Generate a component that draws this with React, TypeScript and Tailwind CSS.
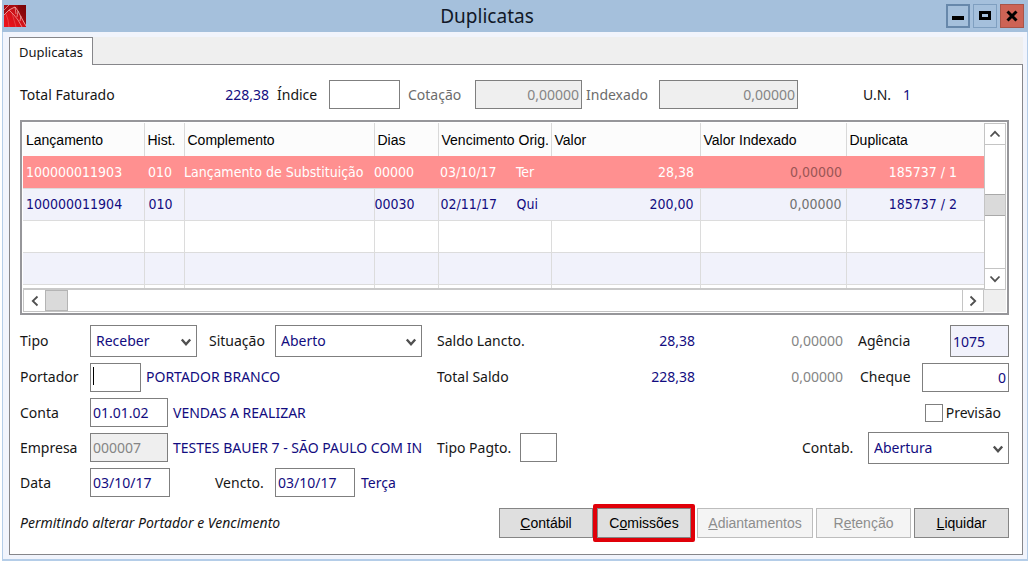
import React from 'react';
import clsx from 'clsx';

const entries = [
  { lancamento: '100000011903', hist: '010', complemento: 'Lançamento de Substituição', dias: '00000', venc: '03/10/17', dia: 'Ter', valor: '28,38', indexado: '0,00000', duplicata: '185737 / 1' },
  { lancamento: '100000011904', hist: '010', complemento: '', dias: '00030', venc: '02/11/17', dia: 'Qui', valor: '200,00', indexado: '0,00000', duplicata: '185737 / 2' },
];

const headers = ['Lançamento', 'Hist.', 'Complemento', 'Dias', 'Vencimento Orig.', 'Valor', 'Valor Indexado', 'Duplicata'];

const field = 'h-[29px] border border-[#7f7f7f] bg-white px-0.5 text-[#120c80] outline-none disabled:bg-[#efefef] disabled:text-[#858585]';

const Chevron = ({ className }: { className?: string }) => (
  <svg viewBox="0 0 12 12" className={clsx('h-3 w-3', className)} fill="none" stroke="#505050" strokeWidth="1.8">
    <path d="M1.5 3.5 6 8.2l4.5-4.7" />
  </svg>
);

const Combo = ({ id, value, className }: { id: string; value: string; className: string }) => (
  <div className={clsx('relative', className)}>
    <select id={id} defaultValue={value} className="h-8 w-full appearance-none border border-[#7f7f7f] bg-white pl-[5px] text-[#120c80] outline-none">
      <option>{value}</option>
    </select>
    <svg viewBox="0 0 12 12" className="pointer-events-none absolute top-3 right-[5px] h-3 w-3" fill="none" stroke="#505050" strokeWidth="2.4">
      <path d="M1.8 2.5 6 7.2l4.2-4.7" />
    </svg>
  </div>
);

const Logo = () => (
  <svg viewBox="0 0 22 22" className="h-[22px] w-[22px]">
    <defs>
      <linearGradient id="logo" x1="0" y1="1" x2="1" y2="0">
        <stop offset="0" stopColor="#f3121b" />
        <stop offset="0.55" stopColor="#cf1218" />
        <stop offset="1" stopColor="#6d0306" />
      </linearGradient>
    </defs>
    <rect width="22" height="22" fill="url(#logo)" />
    <path d="M0 0h11L4 6l-4 4z" fill="#a80c12" />
    <path d="M14 0h8v20c-3-4-5-9-8-13z" fill="#7c0508" opacity="0.6" />
    <g fill="none" stroke="#f9b9b5" strokeWidth="0.8">
      <path d="M0 10 5 5l6-3 3 4 3 6 5 9" />
      <path d="m5 5 5 5 4 5 4 7" opacity="0.8" />
      <path d="m2 9 2 6 1 7M8 8l2 7 2 7" opacity="0.35" />
      <path d="m0 5 5-5M11 2l1 7M14 6l-1 6M17 11l-1 5" opacity="0.8" />
    </g>
  </svg>
);

const TitleBar = () => (
  <header className="flex h-8 items-center bg-[#a5c0dc] pr-1 pl-0.5">
    <Logo />
    <h1 className="flex-1 pl-0.5 text-center text-[19px] leading-6 text-[#111827]">Duplicatas</h1>
    <div className="flex gap-[3px]">
      <button aria-label="Minimizar" className="flex h-6 w-6 items-center justify-center border-2 border-[#6788ab]">
        <svg viewBox="0 0 12 12" className="h-3 w-3"><path d="M0 6h12v4H0z" /></svg>
      </button>
      <button aria-label="Maximizar" className="flex h-6 w-6 items-center justify-center border border-[#7f9fc0]">
        <svg viewBox="0 0 12 12" className="h-3 w-3" fill="none" stroke="#000" strokeWidth="3"><path d="M1.5 2.5h9v6h-9z" /></svg>
      </button>
      <button aria-label="Fechar" className="flex h-6 w-6 items-center justify-center border border-[#a85448] bg-[#cd6355]">
        <svg viewBox="0 0 12 12" className="h-3 w-3" fill="none" stroke="#000" strokeWidth="3"><path d="m1.5 1.5 9 9m0-9-9 9" /></svg>
      </button>
    </div>
  </header>
);

const Totals = () => (
  <div className="flex h-[29px] items-center">
    <span className="w-[124px]">Total Faturado</span>
    <span className="w-[125px] text-right text-[#120c80]">228,38</span>
    <label htmlFor="indice" className="ml-2 w-[52px]">Índice</label>
    <input id="indice" className={clsx(field, 'w-[71px]')} />
    <label htmlFor="cotacao" className="ml-2 w-[67px] text-[#6c6c6c]">Cotação</label>
    <input id="cotacao" disabled defaultValue="0,00000" className={clsx(field, 'w-[107px] text-right')} />
    <label htmlFor="indexado" className="ml-1 w-[73px] text-[#6c6c6c]">Indexado</label>
    <input id="indexado" disabled defaultValue="0,00000" className={clsx(field, 'w-[139px] text-right')} />
    <div className="ml-auto flex w-[146px] gap-3">
      <span>U.N.</span>
      <span className="text-[#120c80]">1</span>
    </div>
  </div>
);

const EntriesTable = () => (
  <section className="mt-[11px] border-2 border-[#96969a] p-px">
    <div className="flex">
      <div className="h-[167px] min-w-0 flex-1 overflow-hidden border-b-2 border-[#c9c9c9]">
        <table className="w-full table-fixed border-collapse whitespace-nowrap">
          <colgroup>
            <col className="w-[121px]" />
            <col className="w-10" />
            <col />
            <col className="w-16" />
            <col className="w-[113px]" />
            <col className="w-[149px]" />
            <col className="w-[146px]" />
            <col className="w-[138px]" />
          </colgroup>
          <thead>
            <tr className="h-[33px] bg-[#fcfcfc] font-['Liberation_Sans',Arial,sans-serif] text-black">
              {headers.map((h) => (
                <th key={h} className="border-r border-[#d9d9d9] p-0 pl-[3px] text-left font-normal last:border-r-0">{h}</th>
              ))}
            </tr>
          </thead>
          <tbody className="font-['DejaVu_Sans_Condensed','Noto_Sans',sans-serif]">
            {entries.map((e, i) => (
              <tr
                key={e.lancamento}
                className={clsx('h-8 border-b border-[#dcdcdc]', i === 0 ? 'bg-[#ff9090] text-white' : 'bg-[#f1f2fb] text-[#120c80]')}
              >
                <td className={clsx('p-0 pl-[3px]', i > 0 && 'border-r border-[#dcdcdc]')}>{e.lancamento}</td>
                <td className={clsx('p-0 pl-1', i > 0 && 'border-r border-[#dcdcdc]')}>{e.hist}</td>
                <td className={clsx('p-0', i > 0 && 'border-r border-[#dcdcdc]')}>{e.complemento}</td>
                <td className={clsx('p-0', i > 0 && 'border-r border-[#dcdcdc]')}>{e.dias}</td>
                <td className="p-0 pl-0.5">
                  <span className="inline-block w-[76px]">{e.venc}</span>
                  {e.dia}
                </td>
                <td className={clsx('p-0 pr-1.5 text-right', i > 0 && 'border-r border-[#dcdcdc]')}>{e.valor}</td>
                <td className={clsx('p-0 pr-1 text-right', i > 0 ? 'border-r border-[#dcdcdc] text-[#707070]' : 'text-[#9a5555]')}>{e.indexado}</td>
                <td className="p-0 pr-[27px] text-right">{e.duplicata}</td>
              </tr>
            ))}
            {[0, 1, 2].map((r) => (
              <tr key={r} className={clsx('h-8 border-b border-[#dcdcdc]', r === 1 ? 'bg-[#f1f2fb]' : 'bg-white')}>
                {headers.map((h) => (
                  <td key={h} className="border-r border-[#dcdcdc] last:border-r-0" />
                ))}
              </tr>
            ))}
          </tbody>
        </table>
      </div>
      {/* vertical scrollbar */}
      <div className="flex w-[22px] flex-col border border-[#c4c4c4] bg-white">
        <button aria-label="Subir" className="flex h-[21px] items-center justify-center border-b border-[#c4c4c4]"><Chevron className="rotate-180" /></button>
        <div className="flex-1 pt-[49px]">
          <div className="h-[22px] border-y border-[#a9a9a9] bg-[#dadada]" />
        </div>
        <button aria-label="Descer" className="flex h-[21px] items-center justify-center border-t border-[#c4c4c4]"><Chevron /></button>
      </div>
    </div>
    {/* horizontal scrollbar */}
    <div className="flex h-[22px] bg-[#efefef]">
      <div className="flex flex-1 border border-t-0 border-[#c4c4c4] bg-white">
        <button aria-label="Esquerda" className="flex w-[21px] items-center justify-center"><Chevron className="rotate-90" /></button>
        <div className="w-[23px] border border-[#b4b4b4] bg-[#dadada]" />
        <button aria-label="Direita" className="ml-auto flex w-[21px] items-center justify-center border-l border-[#c4c4c4]"><Chevron className="-rotate-90" /></button>
      </div>
      <div className="w-[22px]" />
    </div>
  </section>
);

const Amounts = ({ label, value, indexed }: { label: string; value: string; indexed: string }) => (
  <div className="ml-[15px] flex flex-1">
    <span className="flex-1">{label}</span>
    <span className="text-[#120c80]">{value}</span>
    <span className="w-[148px] text-right text-[#858585]">{indexed}</span>
  </div>
);

const Form = () => (
  <form className="mt-2 whitespace-nowrap">
    <div className="flex h-9 items-center">
      <div className="flex w-[402px] items-center">
        <label htmlFor="tipo" className="w-[70px]">Tipo</label>
        <Combo id="tipo" value="Receber" className="w-[107px]" />
        <label htmlFor="situacao" className="ml-3 w-[66px]">Situação</label>
        <Combo id="situacao" value="Aberto" className="w-[147px]" />
      </div>
      <Amounts label="Saldo Lancto." value="28,38" indexed="0,00000" />
      <div className="flex w-[166px] items-center justify-between pl-[15px]">
        <label htmlFor="agencia">Agência</label>
        <input id="agencia" defaultValue="1075" className="h-8 w-[59px] border border-[#7f7f7f] bg-[#f1f2fb] px-0.5 text-[#120c80] outline-none" />
      </div>
    </div>

    <div className="flex h-9 items-center">
      <div className="flex w-[402px] items-center">
        <label htmlFor="portador" className="w-[70px]">Portador</label>
        <div className="relative w-[51px]">
          <input id="portador" className={clsx(field, 'block w-full')} />
          <span className="absolute top-1 left-[3px] h-[18px] w-px bg-black" />
        </div>
        <span className="ml-[5px] text-[#120c80]">PORTADOR BRANCO</span>
      </div>
      <Amounts label="Total Saldo" value="228,38" indexed="0,00000" />
      <div className="flex w-[166px] items-center justify-between pl-[17px]">
        <label htmlFor="cheque">Cheque</label>
        <input id="cheque" defaultValue="0" className={clsx(field, 'w-[87px] text-right')} />
      </div>
    </div>

    <div className="flex h-[35px] items-center">
      <label htmlFor="conta" className="w-[70px]">Conta</label>
      <input id="conta" defaultValue="01.01.02" className={clsx(field, 'w-[78px]')} />
      <span className="ml-[5px] text-[#120c80]">VENDAS A REALIZAR</span>
      <label className="ml-auto flex items-center gap-[3px] pr-2">
        <input type="checkbox" className="h-[18px] w-[18px] appearance-none border border-[#7f7f7f] bg-white checked:bg-[#120c80]" />
        Previsão
      </label>
    </div>

    <div className="flex h-[35px] items-center">
      <label htmlFor="empresa" className="w-[70px]">Empresa</label>
      <input id="empresa" disabled defaultValue="000007" className={clsx(field, 'w-[78px]')} />
      <span className="ml-[5px] w-[249px] text-[#120c80]">TESTES BAUER 7 - SÃO PAULO COM IN</span>
      <label htmlFor="pagto" className="ml-[15px] w-[83px]">Tipo Pagto.</label>
      <input id="pagto" className={clsx(field, 'w-[37px]')} />
      <label htmlFor="contab" className="ml-auto w-[66px]">Contab.</label>
      <Combo id="contab" value="Abertura" className="w-[141px]" />
    </div>

    <div className="flex h-[35px] items-center">
      <label htmlFor="data" className="w-[70px]">Data</label>
      <input id="data" defaultValue="03/10/17" className={clsx(field, 'w-20')} />
      <label htmlFor="vencto" className="ml-[45px] w-[60px]">Vencto.</label>
      <input id="vencto" defaultValue="03/10/17" className={clsx(field, 'w-20')} />
      <span className="ml-1.5 text-[#120c80]">Terça</span>
    </div>
  </form>
);

const actionBtn = "h-[30px] border border-[#858585] bg-[#dfdfdf] font-['Liberation_Sans',Arial,sans-serif] text-black disabled:border-[#bdbdbd] disabled:bg-[#f4f4f4] disabled:text-[#8d8d8d]";

const Actions = () => (
  <div className="mt-1 flex items-center pb-3 whitespace-nowrap">
    <em className="flex-1">Permitindo alterar Portador e Vencimento</em>
    <button className={clsx(actionBtn, 'w-[94px]')}><u>C</u>ontábil</button>
    {/* highlighted action */}
    <div className="rounded-xs border-4 border-[#e00009]">
      <button className={clsx(actionBtn, 'w-[94px]')}>C<u>o</u>missões</button>
    </div>
    <div className="flex gap-[3px] pl-0.5">
      <button disabled className={clsx(actionBtn, 'w-[116px]')}><u>A</u>diantamentos</button>
      <button disabled className={clsx(actionBtn, 'w-[95px]')}>R<u>e</u>tenção</button>
      <button className={clsx(actionBtn, 'w-[95px]')}><u>L</u>iquidar</button>
    </div>
  </div>
);

export default function App() {
  return (
    <div className="bg-white pl-0.5 font-['Noto_Sans','Open_Sans',sans-serif] text-[14px] leading-5 text-[#161616]">
      <TitleBar />
      <div className="border-x border-b-2 border-[#b4cde8] bg-[#f1f4fc] pt-[5px] pr-1 pb-1 pl-1.5">
        <div className="flex bg-[#efefef]">
          <div role="tablist" className="flex">
            <button role="tab" aria-selected="true" className="h-7 w-[84px] border-x border-t border-[#86868a] bg-white text-[13px]">Duplicatas</button>
          </div>
          <div className="flex-1 border-b border-[#86868a]" />
        </div>
        <main className="border-x border-b border-[#86868a] bg-white pt-[15px] pr-[13px] pl-2.5">
          <Totals />
          <EntriesTable />
          <Form />
          <Actions />
        </main>
      </div>
    </div>
  );
}
